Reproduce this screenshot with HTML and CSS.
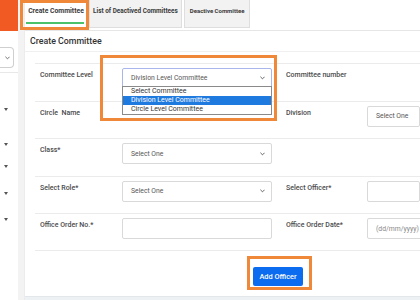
FILE: index.html
```html
<!DOCTYPE html>
<html>
<head>
<meta charset="utf-8">
<link rel="stylesheet" href="styles.css">
</head>
<body>
<div class="app">
  <aside class="sidebar">
    <div class="brand"></div>
    <div class="side-select"><svg class="chev" viewBox="0 0 6 4" width="5" height="4"><path d="M0.5 0.5 L3 3 L5.5 0.5" fill="none" stroke="#555" stroke-width="1"/></svg></div>
    <ul class="side-menu">
      <li class="m1"><span class="caret"></span></li>
      <li class="m2"><span class="caret"></span></li>
      <li class="m3"><span class="caret"></span></li>
      <li class="m4"><span class="caret"></span></li>
      <li class="m5"><span class="caret"></span></li>
    </ul>
  </aside>
  <div class="strip"></div>
  <main class="main">
    <nav class="tabs">
      <div class="tab active">Create Committee</div>
      <div class="tab">List of Deactived Committees</div>
      <div class="tab">Deactive Committee</div>
    </nav>
    <h2 class="card-title">Create Committee</h2>
    <form class="form">
      <div class="row">
        <label class="lbl">Committee Level</label>
        <div class="field select focus"><span>Division Level Committee</span><svg class="chev" viewBox="0 0 6 4" width="5" height="4"><path d="M0.5 0.5 L3 3 L5.5 0.5" fill="none" stroke="#444" stroke-width="1"/></svg></div>
        <label class="lbl">Committee number</label>
        <div></div>
      </div>
      <div class="row">
        <label class="lbl">Circle &nbsp;Name</label>
        <div></div>
        <label class="lbl">Division</label>
        <div class="field select"><span>Select One</span></div>
      </div>
      <div class="row">
        <label class="lbl">Class*</label>
        <div class="field select"><span>Select One</span><svg class="chev" viewBox="0 0 6 4" width="5" height="4"><path d="M0.5 0.5 L3 3 L5.5 0.5" fill="none" stroke="#444" stroke-width="1"/></svg></div>
        <div></div>
        <div></div>
      </div>
      <div class="row">
        <label class="lbl">Select Role*</label>
        <div class="field select"><span>Select One</span><svg class="chev" viewBox="0 0 6 4" width="5" height="4"><path d="M0.5 0.5 L3 3 L5.5 0.5" fill="none" stroke="#444" stroke-width="1"/></svg></div>
        <label class="lbl">Select Officer*</label>
        <div class="field"></div>
      </div>
      <div class="row last">
        <label class="lbl">Office Order No.*</label>
        <div class="field"></div>
        <label class="lbl">Office Order Date*</label>
        <div class="field ph"><span>(dd/mm/yyyy)</span></div>
      </div>
      <div class="actions">
        <button type="button" class="btn">Add Officer</button>
      </div>
    </form>
    <div class="footer-band"></div>
  </main>
</div>

<ul class="dropdown">
  <li>Select Committee</li>
  <li class="sel">Division Level Committee</li>
  <li>Circle Level Committee</li>
</ul>

<div class="mark mark-tab"></div>
<div class="mark mark-drop"></div>
<div class="mark mark-btn"></div>
</body>
</html>
```

FILE: styles.css
```css
* { box-sizing: border-box; }
html, body { margin: 0; padding: 0; }
body {
  width: 420px;
  height: 300px;
  overflow: hidden;
  background: #fff;
  font-family: Roboto, "Open Sans", Arial, sans-serif;
  color: #444;
  position: relative;
}
.app {
  display: flex;
  height: 300px;
}
.sidebar {
  width: 18px;
  flex: none;
  background: #fff;
  display: flex;
  flex-direction: column;
}
.brand {
  height: 31px;
  background: #f25a24;
}
.side-select {
  margin-top: 16px;
  width: 14px;
  height: 21px;
  border: 1px solid #cfcfcf;
  border-left: none;
  border-radius: 0 4px 4px 0;
  display: flex;
  align-items: center;
  justify-content: flex-end;
  padding-right: 3px;
}
.side-select .chev { display: block; }
.side-menu {
  list-style: none;
  margin: 4px 0 0;
  padding: 0;
  border-top: 1px solid #e8e8e8;
  display: flex;
  flex-direction: column;
}
.side-menu li { position: relative; height: 3px; }
.caret {
  position: absolute;
  left: 4px;
  top: 0;
  width: 0; height: 0;
  border-left: 2px solid transparent;
  border-right: 2px solid transparent;
  border-top: 3px solid #555;
}
.m1 { margin-top: 35px; }
.m2 { margin-top: 32px; }
.m3 { margin-top: 19px; }
.m4 { margin-top: 24px; }
.m5 { margin-top: 23px; }

.strip {
  width: 7px;
  flex: none;
  background: #f3f3f3;
  border-right: 1px solid #ececec;
}
.main {
  flex: 1;
  min-width: 0;
  display: flex;
  flex-direction: column;
}
.tabs {
  height: 31px;
  flex: none;
  display: flex;
  align-items: flex-start;
  gap: 2px;
  border-bottom: 1px solid #e6e6e6;
}
.tab {
  height: 28px;
  padding: 0 3px;
  display: flex;
  align-items: center;
  padding-bottom: 6px;
  font-size: 6.4px;
  font-weight: 700;
  color: #3a3a3a;
  background: #f2f2f2;
  border: 1px solid #dedede;
  border-top: none;
  white-space: nowrap;
}
.tab + .tab + .tab { padding: 0 5px 6px; font-size: 6px; }
.tab.active {
  width: 62px;
  background: #fff;
  border: none;
  font-size: 6.8px;
  position: relative;
  justify-content: center;
  padding-bottom: 6px;
}
.tab.active::after {
  content: "";
  position: absolute;
  left: 1px;
  right: 3px;
  top: 22px;
  height: 2px;
  background: #4cc36a;
}
.card-title {
  margin: 0;
  height: 21px;
  display: flex;
  align-items: center;
  font-size: 8.8px;
  font-weight: 500;
  color: #333;
  border-bottom: 1px solid #f0f0f0;
  padding-left: 5px;
}
.form {
  margin: 11px 0 0 10px;
}
.row {
  height: 37.5px;
  border-top: 1px solid #ebebeb;
  display: grid;
  grid-template-columns: 82px 150px 95px 1fr;
  padding-left: 5px;
  align-items: start;
}
.row > :nth-child(3) { margin-left: 14px; }
.row.last { border-bottom: 1px solid #ebebeb; height: 38px; }
.lbl {
  padding-top: 7px;
  font-size: 7px;
  font-weight: 500;
  color: #4a4a4a;
  line-height: 8px;
  white-space: nowrap;
}
.field {
  margin-top: 4px;
  height: 21px;
  border: 1px solid #d9d9d9;
  border-radius: 2px;
  background: #fff;
  display: flex;
  align-items: center;
  justify-content: space-between;
  padding: 0 6px 0 8px;
  font-size: 6.8px;
  color: #555;
}
.field.focus {
  height: 20px;
  border-color: #a9b6ec;
}
.field.ph { color: #888; }
.field .chev { display: block; }
.actions {
  padding: 13px 0 0 218px;
}
.btn {
  width: 50px;
  height: 19px;
  border: none;
  border-radius: 2px;
  background: #0b6cf0;
  color: #fff;
  font-family: Roboto, Arial, sans-serif;
  font-size: 7.4px;
  font-weight: 500;
  padding: 0;
}
.footer-band {
  margin-top: auto;
  height: 4px;
  background: #eef1f4;
  border-top: 1px solid #e3e6ea;
}

.dropdown {
  position: absolute;
  left: 122px;
  top: 86px;
  width: 150px;
  margin: 0;
  padding: 0;
  list-style: none;
  border: 1px solid #8a8a8a;
  background: #fff;
  font-size: 7px;
  color: #333;
}
.dropdown li {
  height: 9px;
  line-height: 9px;
  padding-left: 8px;
}
.dropdown li.sel {
  background: #1f7ae0;
  color: #fff;
}
.mark {
  position: absolute;
  border: 3px solid #f0883a;
}
.mark-tab { left: 20px; top: 0; width: 69px; height: 30px; }
.mark-drop { left: 100px; top: 55px; width: 177px; height: 66px; }
.mark-btn { left: 247px; top: 256px; width: 65px; height: 34px; }
```
